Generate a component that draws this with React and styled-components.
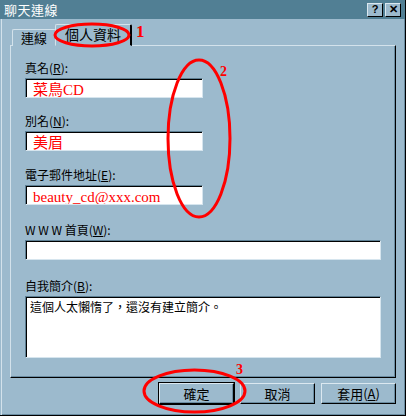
import React from "react";
import styled, { createGlobalStyle } from "styled-components";

const GlobalStyle = createGlobalStyle`
  body {
    margin: 0;
    background: #9cbacd;
  }
`;

const uiFont = `"Noto Sans CJK TC", "Liberation Sans", sans-serif`;

const Window = styled.div`
  position: relative;
  box-sizing: border-box;
  width: 406px;
  height: 416px;
  background: #9cbacd;
  border-right: 1px solid #000;
  border-bottom: 1px solid #000;
  box-shadow: inset 1px 0 0 #9cbacd, inset 2px 0 0 #d3e2eb, inset -1px -1px 0 #6a8ca1;
  font-family: ${uiFont};
  font-size: 12px;
  color: #000;
  display: flex;
  flex-direction: column;
`;

const TitleBar = styled.div`
  height: 19px;
  background: #517f94;
  display: flex;
  align-items: center;
  justify-content: space-between;
  padding: 0 4px 0 4px;
`;

const Title = styled.span`
  color: #fff;
  font-size: 13px;
  line-height: 19px;
  letter-spacing: 0.5px;
`;

const TitleButtons = styled.div`
  display: flex;
  gap: 2px;
`;

const TitleButton = styled.div`
  box-sizing: border-box;
  width: 16px;
  height: 14px;
  background: #9cbacd;
  border-top: 1px solid #dbe8f0;
  border-left: 1px solid #dbe8f0;
  border-right: 1px solid #000;
  border-bottom: 1px solid #000;
  display: flex;
  align-items: center;
  justify-content: center;
  font-family: "Liberation Sans", sans-serif;
  font-weight: bold;
  font-size: 11px;
  line-height: 1;
`;

const Body = styled.div`
  flex: 1;
  display: flex;
  flex-direction: column;
  padding: 6px 9px 0 10px;
`;

const Tabs = styled.div`
  display: flex;
  align-items: flex-end;
  padding-left: 2px;
  height: 21px;
  margin-bottom: -1px;
  position: relative;
  z-index: 1;
`;

const Tab = styled.div`
  box-sizing: border-box;
  height: ${(p) => (p.active ? "22px" : "17px")};
  padding: 0 ${(p) => (p.active ? "9px" : "8px")};
  margin-left: ${(p) => (p.active ? "-1px" : "0")};
  background: #9cbacd;
  border-top: 1px solid #d3e2eb;
  border-left: 1px solid #d3e2eb;
  border-right: ${(p) => (p.active ? "2px solid #000" : "1px solid #6a8ca1")};
  border-radius: 2px 2px 0 0;
  font-size: ${(p) => (p.active ? "14px" : "13px")};
  line-height: ${(p) => (p.active ? "19px" : "16px")};
  white-space: nowrap;
  ${(p) => (p.active ? "border-bottom: 1px solid #9cbacd;" : "")}
`;

const Panel = styled.div`
  box-sizing: border-box;
  height: 333px;
  border-top: 1px solid #d3e2eb;
  border-left: 1px solid #d3e2eb;
  border-right: 1px solid #000;
  border-bottom: 1px solid #000;
  box-shadow: inset -1px -1px 0 #6a8ca1;
  padding: 15px 14px 0 14px;
  display: flex;
  flex-direction: column;
`;

const Field = styled.div`
  display: flex;
  flex-direction: column;
  margin-top: ${(p) => p.gap || 0}px;
`;

const Label = styled.label`
  line-height: 14px;
  height: 14px;
  margin-bottom: 3px;
  u {
    text-decoration: underline;
    text-underline-offset: 1px;
  }
`;

const Input = styled.div`
  box-sizing: border-box;
  width: ${(p) => (p.wide ? "356px" : "178px")};
  height: ${(p) => p.h || 20}px;
  background: #fff;
  border-top: 1px solid #5d7f93;
  border-left: 1px solid #5d7f93;
  border-right: 1px solid #d6e5ee;
  border-bottom: 1px solid #d6e5ee;
  box-shadow: inset 1px 1px 0 #000;
  padding: 2px 4px 0 7px;
  overflow: hidden;
`;

const RedValue = styled.span`
  color: #f00;
  font-family: "Liberation Serif", "Noto Sans CJK TC", serif;
  font-size: 15px;
  line-height: 17px;
  white-space: nowrap;
`;

const Memo = styled.span`
  display: block;
  margin-left: -3px;
  line-height: 16px;
  font-size: 12px;
`;

const ButtonRow = styled.div`
  display: flex;
  justify-content: flex-end;
  gap: 6px;
  padding-top: 5px;
`;

const Button = styled.div`
  box-sizing: border-box;
  width: 75px;
  height: 21px;
  background: #9cbacd;
  border-top: 1px solid #dbe8f0;
  border-left: 1px solid #dbe8f0;
  border-right: 1px solid #000;
  border-bottom: 1px solid #000;
  box-shadow: inset -1px -1px 0 #6a8ca1;
  outline: ${(p) => (p.primary ? "1px solid #000" : "none")};
  display: flex;
  align-items: center;
  justify-content: center;
  font-size: 13px;
  u {
    text-underline-offset: 1px;
  }
`;

const Marks = styled.svg`
  position: absolute;
  left: 0;
  top: 0;
  z-index: 5;
  pointer-events: none;
  font-family: "Liberation Serif", serif;
  font-weight: bold;
`;

const fields = [
  { label: "真名", key: "R", value: "菜鳥CD", gap: 0 },
  { label: "別名", key: "N", value: "美眉", gap: 16 },
  { label: "電子郵件地址", key: "E", value: "beauty_cd@xxx.com", gap: 17 },
];

export default function App() {
  return (
    <>
      <GlobalStyle />
      <Window>
        <TitleBar>
          <Title>聊天連線</Title>
          <TitleButtons>
            <TitleButton>?</TitleButton>
            <TitleButton>✕</TitleButton>
          </TitleButtons>
        </TitleBar>
        <Body>
          <Tabs>
            <Tab>連線</Tab>
            <Tab active>個人資料</Tab>
          </Tabs>
          <Panel>
            {fields.map((f) => (
              <Field key={f.key} gap={f.gap}>
                <Label>
                  {f.label}(<u>{f.key}</u>):
                </Label>
                <Input>
                  <RedValue>{f.value}</RedValue>
                </Input>
              </Field>
            ))}
            <Field gap={18}>
              <Label>
                W W W 首頁(<u>W</u>):
              </Label>
              <Input wide />
            </Field>
            <Field gap={19}>
              <Label>
                自我簡介(<u>B</u>):
              </Label>
              <Input wide h={62}>
                <Memo>這個人太懶惰了，還沒有建立簡介。</Memo>
              </Input>
            </Field>
          </Panel>
          <ButtonRow>
            <Button primary>確定</Button>
            <Button>取消</Button>
            <Button>
              套用(<u>A</u>)
            </Button>
          </ButtonRow>
        </Body>
        <Marks width="406" height="416" viewBox="0 0 406 416">
          <g fill="none" stroke="#f00" strokeWidth="3">
            <ellipse cx="92" cy="35" rx="37" ry="11" />
            <ellipse cx="199" cy="138.5" rx="31" ry="78.5" />
            <ellipse cx="194.5" cy="391" rx="50.5" ry="21" />
          </g>
          <g fill="#f00">
            <text x="136" y="37" fontSize="17">1</text>
            <text x="220" y="76" fontSize="14">2</text>
            <text x="236" y="374" fontSize="14">3</text>
          </g>
        </Marks>
      </Window>
    </>
  );
}
